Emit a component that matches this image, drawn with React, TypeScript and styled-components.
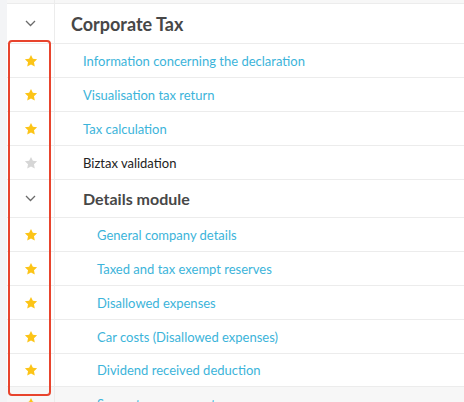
import React from 'react';
import styled, { createGlobalStyle } from 'styled-components';

const GlobalStyle = createGlobalStyle`
  html, body {
    margin: 0;
    padding: 0;
    background: #ffffff;
    font-family: Lato, "Open Sans", "Liberation Sans", sans-serif;
    overflow: hidden;
  }
`;

const Page = styled.div`
  position: relative;
  display: flex;
  width: 464px;
  height: 402px;
  overflow: hidden;
`;

const Rail = styled.div`
  width: 7px;
  flex: none;
  background: #f3f4f6;
`;

const Table = styled.div`
  flex: 1;
  display: flex;
  flex-direction: column;
`;

const Row = styled.div<{ $h: number; $muted?: boolean }>`
  display: grid;
  grid-template-columns: 48px 1fr;
  height: ${(p) => p.$h}px;
  flex: none;
  box-sizing: border-box;
  border-bottom: 1px solid #ececec;
  background: ${(p) => (p.$muted ? '#f7f7f7' : '#ffffff')};
`;

const IconCell = styled.div`
  display: flex;
  align-items: center;
  justify-content: center;
  border-right: 1px solid #ececec;
`;

const Label = styled.div<{ $indent: number; $kind: 'title' | 'section' | 'link' | 'plain' }>`
  display: flex;
  align-items: center;
  padding-left: ${(p) => p.$indent}px;
  white-space: nowrap;
  font-size: ${(p) => (p.$kind === 'title' ? 18 : p.$kind === 'section' ? 16 : 13)}px;
  font-weight: ${(p) => (p.$kind === 'title' || p.$kind === 'section' ? 700 : 400)};
  color: ${(p) =>
    p.$kind === 'link' ? '#3cb4da' : p.$kind === 'plain' ? '#222222' : '#474747'};
`;

const Highlight = styled.div`
  position: absolute;
  left: 8px;
  top: 40px;
  width: 43px;
  height: 356px;
  box-sizing: border-box;
  border: 2px solid #e8442d;
  border-radius: 4px;
  pointer-events: none;
`;

const Star = ({ on }: { on: boolean }) => (
  <svg width="14" height="14" viewBox="0 0 24 24">
    <path
      d="M12 1.5l3.2 6.7 7.3.9-5.4 5.1 1.4 7.2L12 17.9l-6.5 3.5 1.4-7.2-5.4-5.1 7.3-.9z"
      fill={on ? '#fcc417' : '#d6d6d6'}
    />
  </svg>
);

const Chevron = () => (
  <svg width="11" height="7" viewBox="0 0 11 7">
    <polyline points="1,1 5.5,5.5 10,1" fill="none" stroke="#6b6b6b" strokeWidth="1.3" />
  </svg>
);

type Item = {
  text: string;
  kind: 'title' | 'section' | 'link' | 'plain';
  indent: number;
  h: number;
  icon: 'chevron' | 'star' | 'star-off' | 'none';
  muted?: boolean;
};

const items: Item[] = [
  { text: '', kind: 'plain', indent: 0, h: 4, icon: 'none', muted: true },
  { text: 'Corporate Tax', kind: 'title', indent: 16, h: 40, icon: 'chevron' },
  { text: 'Information concerning the declaration', kind: 'link', indent: 28, h: 34, icon: 'star' },
  { text: 'Visualisation tax return', kind: 'link', indent: 28, h: 34, icon: 'star' },
  { text: 'Tax calculation', kind: 'link', indent: 28, h: 34, icon: 'star' },
  { text: 'Biztax validation', kind: 'plain', indent: 28, h: 34, icon: 'star-off' },
  { text: 'Details module', kind: 'section', indent: 28, h: 38, icon: 'chevron' },
  { text: 'General company details', kind: 'link', indent: 42, h: 34, icon: 'star' },
  { text: 'Taxed and tax exempt reserves', kind: 'link', indent: 42, h: 34, icon: 'star' },
  { text: 'Disallowed expenses', kind: 'link', indent: 42, h: 34, icon: 'star' },
  { text: 'Car costs (Disallowed expenses)', kind: 'link', indent: 42, h: 34, icon: 'star' },
  { text: 'Dividend received deduction', kind: 'link', indent: 42, h: 33, icon: 'star' },
  { text: 'Separate assessment', kind: 'link', indent: 42, h: 34, icon: 'star', muted: true },
];

const App: React.FC = () => {
  return (
    <>
      <GlobalStyle />
      <Page>
        <Rail />
        <Table>
          {items.map((it, i) => (
            <Row key={i} $h={it.h} $muted={it.muted}>
              <IconCell>
                {it.icon === 'chevron' && <Chevron />}
                {it.icon === 'star' && <Star on />}
                {it.icon === 'star-off' && <Star on={false} />}
              </IconCell>
              <Label $indent={it.indent} $kind={it.kind}>
                {it.text}
              </Label>
            </Row>
          ))}
        </Table>
        <Highlight />
      </Page>
    </>
  );
};

export default App;
